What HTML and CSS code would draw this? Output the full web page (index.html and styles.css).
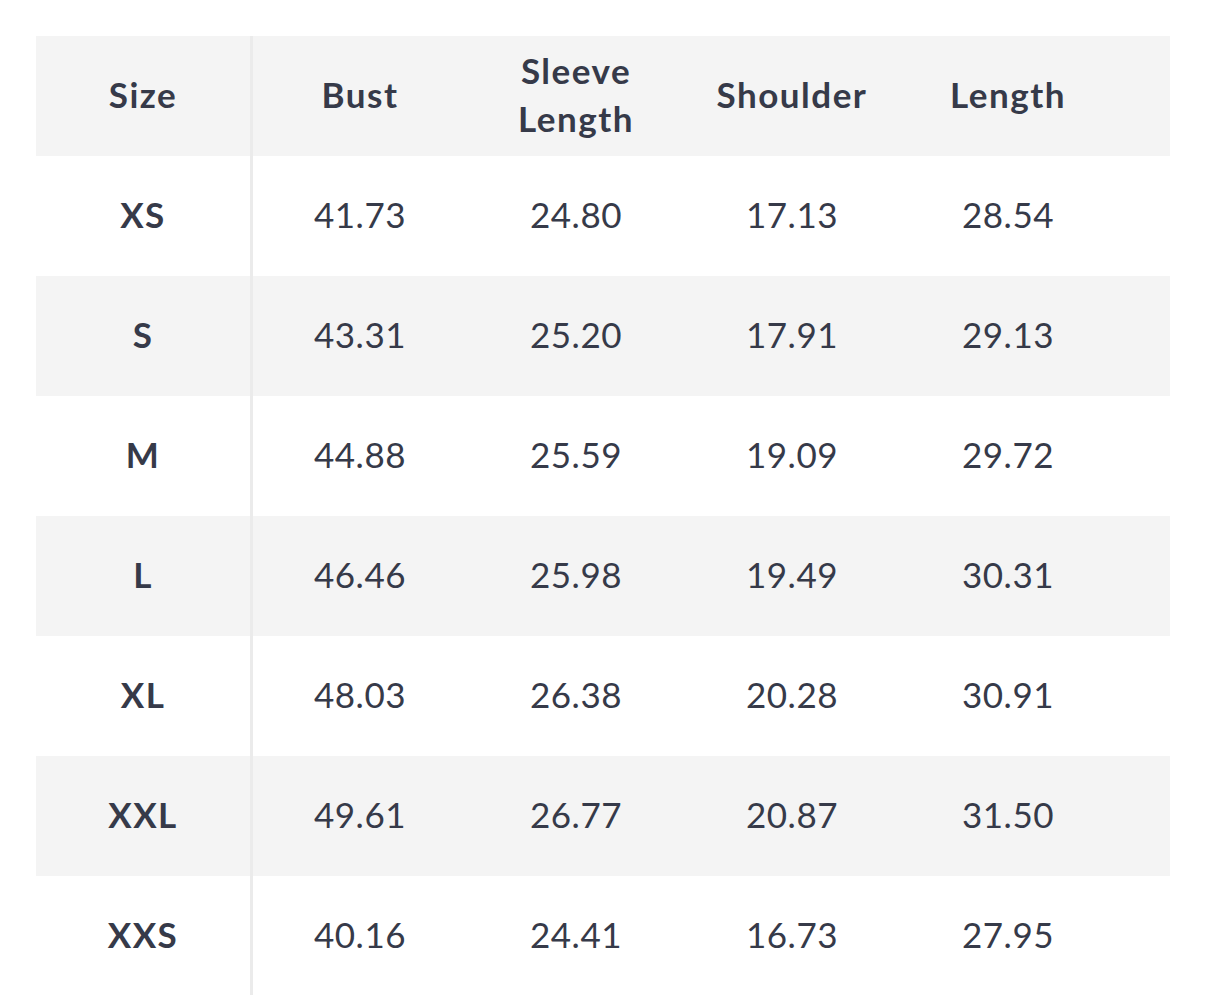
FILE: index.html
```html
<!DOCTYPE html>
<html>
<head>
<meta charset="utf-8">
<link rel="stylesheet" href="styles.css">
</head>
<body>
<div class="table">
  <div class="row head">
    <div class="cell size">Size</div>
    <div class="cell">Bust</div>
    <div class="cell">Sleeve<br>Length</div>
    <div class="cell">Shoulder</div>
    <div class="cell">Length</div>
    <div class="cell"></div>
  </div>
  <div class="row">
    <div class="cell size">XS</div><div class="cell">41.73</div><div class="cell">24.80</div><div class="cell">17.13</div><div class="cell">28.54</div><div class="cell"></div>
  </div>
  <div class="row alt">
    <div class="cell size">S</div><div class="cell">43.31</div><div class="cell">25.20</div><div class="cell">17.91</div><div class="cell">29.13</div><div class="cell"></div>
  </div>
  <div class="row">
    <div class="cell size">M</div><div class="cell">44.88</div><div class="cell">25.59</div><div class="cell">19.09</div><div class="cell">29.72</div><div class="cell"></div>
  </div>
  <div class="row alt">
    <div class="cell size">L</div><div class="cell">46.46</div><div class="cell">25.98</div><div class="cell">19.49</div><div class="cell">30.31</div><div class="cell"></div>
  </div>
  <div class="row">
    <div class="cell size">XL</div><div class="cell">48.03</div><div class="cell">26.38</div><div class="cell">20.28</div><div class="cell">30.91</div><div class="cell"></div>
  </div>
  <div class="row alt">
    <div class="cell size">XXL</div><div class="cell">49.61</div><div class="cell">26.77</div><div class="cell">20.87</div><div class="cell">31.50</div><div class="cell"></div>
  </div>
  <div class="row last">
    <div class="cell size">XXS</div><div class="cell">40.16</div><div class="cell">24.41</div><div class="cell">16.73</div><div class="cell">27.95</div><div class="cell"></div>
  </div>
</div>
</body>
</html>
```
FILE: styles.css
```css
html, body {
  margin: 0;
  padding: 0;
  background: #ffffff;
}
body {
  padding: 36px 36px 0 36px;
  font-family: "Lato", "Noto Sans", sans-serif;
  color: #363a49;
}
.table {
  width: 1134px;
}
.row {
  display: grid;
  grid-template-columns: 217px 214px 218px 214px 218px 1fr;
  height: 120px;
  background: #ffffff;
}
.row.head,
.row.alt {
  background: #f4f4f4;
}
.row.last {
  height: 119px;
}
.cell {
  display: flex;
  align-items: center;
  justify-content: center;
  text-align: center;
  padding-bottom: 4px;
  font-size: 35px;
  line-height: 48px;
  font-weight: 400;
  letter-spacing: 0.5px;
}
.cell.size {
  border-right: 3px solid #ebebeb;
  font-weight: 700;
  letter-spacing: 1.5px;
}
.row.head .cell {
  font-weight: 700;
  letter-spacing: 1.5px;
}
```
